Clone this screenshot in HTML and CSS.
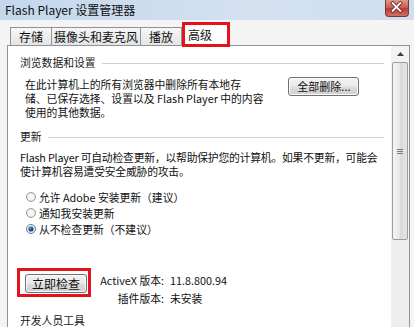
FILE: index.html
```html
<!DOCTYPE html>
<html lang="zh-CN">
<head>
<meta charset="utf-8">
<title>Flash Player 设置管理器</title>
<link rel="stylesheet" href="styles.css">
</head>
<body>
<div class="window">
  <div class="titlebar">
    <span class="title">Flash Player 设置管理器</span>
    <span class="close">
      <svg width="24" height="17" viewBox="0 0 24 17">
        <path d="M8 4 L16 12 M16 4 L8 12" stroke="#6b1d1d" stroke-width="3.6" stroke-linecap="square"/>
        <path d="M8 4 L16 12 M16 4 L8 12" stroke="#ffffff" stroke-width="2" stroke-linecap="square"/>
      </svg>
    </span>
  </div>
  <div class="body">
    <div class="tabs">
      <div class="tab tab-storage">存储</div>
      <div class="tab tab-camera">摄像头和麦克风</div>
      <div class="tab tab-play">播放</div>
      <div class="tab tab-active">高级</div>
    </div>
    <div class="panel">
      <div class="content">
        <div class="section-head"><span>浏览数据和设置</span><span class="rule"></span></div>
        <div class="browse">
          <p class="browse-text"><span class="line">在此计算机上的所有浏览器中删除所有本地存</span><span class="line">储、已保存选择、设置以及 Flash Player 中的内容</span><span class="line">使用的其他数据。</span></p>
          <button class="btn btn-delete">全部删除...</button>
        </div>
        <div class="section-head head-update"><span>更新</span><span class="rule"></span></div>
        <p class="update-text"><span class="line">Flash Player 可自动检查更新，以帮助保护您的计算机。如果不更新，可能会</span><span class="line">使计算机容易遭受安全威胁的攻击。</span></p>
        <ul class="radios">
          <li class="radio-row">
            <svg class="radio" width="10" height="10" viewBox="0 0 10 10"><circle cx="5" cy="5" r="4.5" fill="#ececec" stroke="#9a9a9a"/><circle cx="5" cy="5" r="3" fill="#f6f6f6"/></svg>
            <span>允许 Adobe 安装更新（建议）</span>
          </li>
          <li class="radio-row">
            <svg class="radio" width="10" height="10" viewBox="0 0 10 10"><circle cx="5" cy="5" r="4.5" fill="#ececec" stroke="#9a9a9a"/><circle cx="5" cy="5" r="3" fill="#f6f6f6"/></svg>
            <span>通知我安装更新</span>
          </li>
          <li class="radio-row">
            <svg class="radio" width="10" height="10" viewBox="0 0 10 10"><circle cx="5" cy="5" r="4.5" fill="#e8eef5" stroke="#6a7d95"/><circle cx="5" cy="5" r="2.6" fill="#1d4f93"/><circle cx="4.4" cy="4.3" r="1" fill="#6d9bd6"/></svg>
            <span>从不检查更新（不建议）</span>
          </li>
        </ul>
        <div class="check-row">
          <span class="highlight-box"><button class="btn btn-check">立即检查</button></span>
          <dl class="versions">
            <dt>ActiveX 版本:</dt><dd>11.8.800.94</dd>
            <dt>插件版本:</dt><dd>未安装</dd>
          </dl>
        </div>
        <div class="section-head head-dev"><span>开发人员工具</span></div>
      </div>
      <div class="scrollbar">
        <div class="sb-up">
          <svg width="7" height="4" viewBox="0 0 7 4"><path d="M0 4 L3.5 0 L7 4 Z" fill="#404040"/></svg>
        </div>
        <div class="sb-thumb">
          <svg width="6" height="5" viewBox="0 0 6 5"><path d="M0 0.5 H6 M0 2.5 H6 M0 4.5 H6" stroke="#7a7a7a" stroke-width="1"/></svg>
        </div>
        <div class="sb-track"></div>
      </div>
    </div>
  </div>
</div>
</body>
</html>
```
FILE: styles.css
```css
* { box-sizing: border-box; }
html, body { margin: 0; padding: 0; }
body {
  background: #f0f0f0;
  font-family: "Noto Sans CJK SC", "Noto Sans", sans-serif;
  font-size: 11px;
  color: #111;
}
.window {
  width: 414px;
  height: 327px;
  overflow: hidden;
  background: #f4f4f4;
}
.titlebar {
  height: 20px;
  display: flex;
  justify-content: space-between;
  align-items: flex-start;
  background: linear-gradient(to right, #c4d7ec, #d3e1f1 60%, #cfdff0);
}
.title {
  padding-left: 5px;
  font-size: 12px;
  line-height: 20px;
  color: #101010;
}
.close {
  margin-right: 5px;
  width: 24px;
  height: 17px;
  display: flex;
  border: 1px solid #7b3a3a;
  border-top: none;
  border-radius: 0 0 4px 4px;
  background: linear-gradient(#dc9a8e, #c9554a 50%, #b83a2e 51%, #d07060);
}
.close svg { display: block; margin: -1px 0 0 -1px; }
.body {
  padding: 2px 4px 0 7px;
}
.tabs {
  display: flex;
  align-items: flex-end;
  padding-left: 3px;
  height: 25px;
  margin-bottom: -2px;
}
.tab {
  height: 18px;
  margin-bottom: 2px;
  border: 1px solid #8e9399;
  border-bottom: none;
  background: linear-gradient(#f6f6f6, #e4e4e4);
  font-size: 12px;
  line-height: 17px;
  text-align: center;
  color: #111;
  white-space: nowrap;
}
.tab + .tab { margin-left: -1px; }
.tab-storage { width: 42px; }
.tab-camera { width: 90px; }
.tab-play { width: 42px; }
.tab.tab-active {
  position: relative;
  z-index: 1;
  width: 48px;
  height: 25px;
  margin-bottom: 0;
  margin-left: 0;
  border: 3px solid #e3121c;
  background: #ffffff;
  line-height: 19px;
  text-align: left;
  padding-left: 3px;
}
.panel {
  display: flex;
  height: 300px;
  border: 1px solid #8e9399;
  background: #ffffff;
}
.content {
  flex: 1;
  min-width: 0;
  padding: 9px 7px 0 12px;
  font-size: 10.8px;
  line-height: 14px;
  white-space: nowrap;
}
.line {
  display: block;
  height: 14px;
  overflow: visible;
}
.section-head {
  display: flex;
  align-items: center;
  gap: 6px;
  height: 14px;
  color: #1a1a1a;
}
.rule {
  flex: 1;
  height: 1px;
  margin-top: 2px;
  background: #cfcfcf;
}
.browse {
  display: flex;
  align-items: flex-start;
  gap: 25px;
  margin-top: 8px;
  padding-left: 5px;
}
.browse-text, .update-text { margin: 0; }
.update-text { letter-spacing: -0.2px; }
.btn {
  font-family: inherit;
  font-size: 11px;
  color: #111;
  padding: 0;
  border: 1px solid #707070;
  border-radius: 3px;
  background: linear-gradient(#f2f2f2, #ebebeb 48%, #dddddd 52%, #cfcfcf);
  box-shadow: inset 0 0 0 1px #fbfbfb;
  line-height: 17px;
}
.btn-delete { width: 71px; height: 19px; }
.head-update { margin-top: 10px; }
.update-text { margin-top: 7px; }
.radios {
  list-style: none;
  margin: 11px 0 0;
  padding: 0 0 0 6px;
}
.radio-row {
  display: flex;
  align-items: center;
  gap: 3px;
  height: 16px;
}
.radio { display: block; }
.check-row {
  display: flex;
  align-items: flex-start;
  margin-top: 31px;
  height: 37px;
}
.highlight-box {
  display: block;
  margin-left: -3px;
  padding: 3px 1px 1px 5px;
  border: 3px solid #e3121c;
}
.btn-check { display: block; width: 62px; height: 19px; font-size: 12px; }
.versions {
  display: grid;
  grid-template-columns: 67px auto;
  column-gap: 6px;
  margin: 3px 0 0 6px;
  line-height: 18px;
}
.versions dt { text-align: right; }
.versions dd { margin: 0; }
.head-dev { margin-top: 8px; }
.scrollbar {
  width: 18px;
  display: flex;
  flex-direction: column;
  background: #f3f3f3;
}
.sb-up {
  height: 16px;
  display: flex;
  align-items: center;
  justify-content: center;
  padding-left: 1px;
}
.sb-up svg { display: block; }
.sb-thumb {
  height: 178px;
  margin: 0 1px;
  border: 1px solid #9c9c9c;
  border-radius: 2px;
  background: linear-gradient(to right, #f4f4f4, #e6e6e6 50%, #dadada 51%, #e4e4e4);
  display: flex;
  align-items: center;
  justify-content: center;
}
.sb-thumb svg { display: block; }
.sb-track {
  flex: 1;
  background: #eeeeee;
}
```
